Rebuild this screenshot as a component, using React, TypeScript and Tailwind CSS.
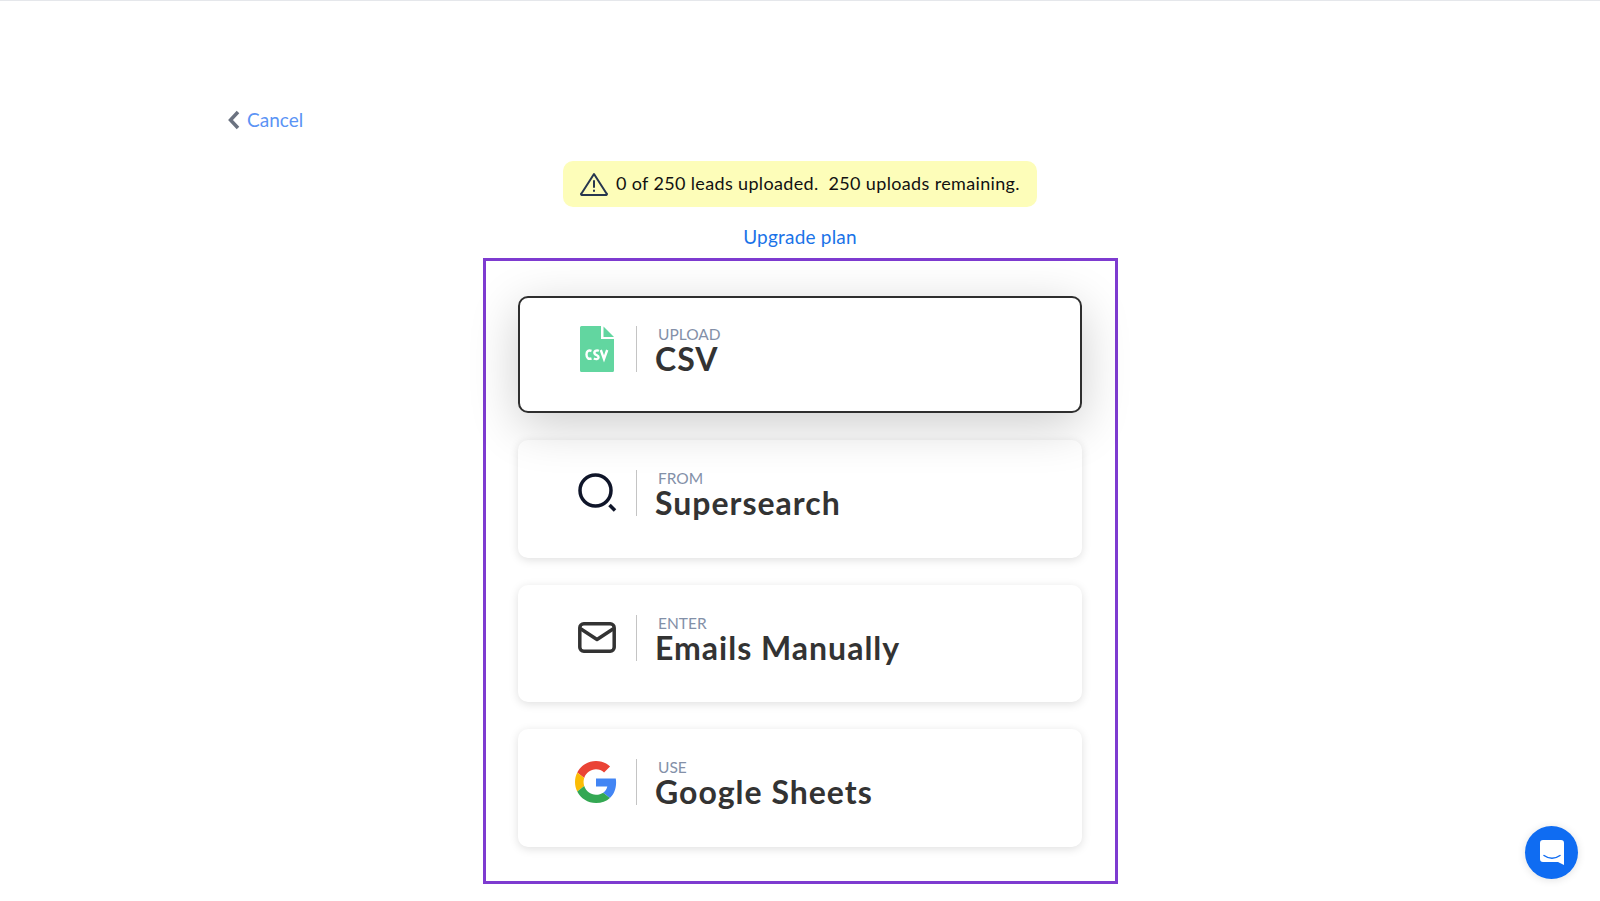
import React from 'react';

const font = { fontFamily: 'Lato, "Noto Sans", sans-serif' };

const CsvIcon = () => (
  <svg width="34" height="46" viewBox="0 0 34 46">
    <path d="M1.500 0H21V13H34V44.500A1.500 1.500 0 0 1 32.500 46H1.500A1.500 1.500 0 0 1 0 44.500V1.500A1.500 1.500 0 0 1 1.500 0Z" fill="#62d6a0" />
    <path d="M23.500 0.500L34 11H23.500Z" fill="#62d6a0" />
    <path d="M11.500 24.800C8.500 23.800 6.500 25 6.500 28.500C6.500 32 8.500 33.500 11.500 32.500M18.800 24.800C16.500 23.800 13.800 25 14.500 27.500C15.200 29.500 18.800 29 18.600 31.500C18.400 33.500 15.800 33.500 13.800 32.500M20.800 24L24 33L27.200 24" fill="none" stroke="#fff" strokeWidth="2.400" />
  </svg>
);

const SearchIcon = () => (
  <svg width="40" height="40" viewBox="0 0 40 40" fill="none" stroke="#0f1529">
    <circle cx="18.500" cy="17.500" r="15.500" strokeWidth="3.500" />
    <path d="M32.500 32L38 37.500" strokeWidth="3.500" />
  </svg>
);

const MailIcon = () => (
  <svg width="38" height="32" viewBox="0 0 38 32" fill="none" stroke="#333" strokeWidth="3.500" strokeLinecap="round" strokeLinejoin="round">
    <rect x="1.800" y="1.800" width="34.400" height="27.400" rx="4" />
    <path d="M3 7L19 17.500L35 7" />
  </svg>
);

const GoogleIcon = () => (
  <svg width="42" height="42" viewBox="0 0 48 48" className="-ml-[2px]">
    <path fill="#EA4335" d="M24 9.500c3.540 0 6.710 1.220 9.210 3.600l6.850-6.850C35.900 2.380 30.470 0 24 0 14.620 0 6.510 5.380 2.560 13.220l7.980 6.190C12.430 13.720 17.740 9.500 24 9.500z" />
    <path fill="#4285F4" d="M46.980 24.550c0-1.570-.15-3.090-.38-4.550H24v9.020h12.940c-.58 2.960-2.260 5.480-4.780 7.180l7.730 6c4.510-4.180 7.090-10.360 7.090-17.650z" />
    <path fill="#FBBC05" d="M10.530 28.590c-.48-1.450-.76-2.990-.76-4.590s.27-3.140.76-4.590l-7.980-6.190C.92 16.460 0 20.120 0 24c0 3.880.92 7.540 2.560 10.780l7.970-6.190z" />
    <path fill="#34A853" d="M24 48c6.480 0 11.930-2.130 15.890-5.810l-7.730-6c-2.150 1.450-4.920 2.300-8.160 2.300-6.260 0-11.570-4.220-13.470-9.910l-7.980 6.190C6.510 42.620 14.620 48 24 48z" />
  </svg>
);

const options = [
  { label: 'UPLOAD', title: 'CSV', icon: <CsvIcon />, active: true },
  { label: 'FROM', title: 'Supersearch', icon: <SearchIcon />, active: false },
  { label: 'ENTER', title: 'Emails Manually', icon: <MailIcon />, active: false },
  { label: 'USE', title: 'Google Sheets', icon: <GoogleIcon />, active: false },
];

export default function App() {
  return (
    <div className="relative h-[901px] overflow-hidden bg-white border-t border-gray-200" style={font}>
      <div className="pl-[227px] pt-[107px] h-[160px]">
        <a className="flex items-center gap-[6px] text-[19px] leading-6 text-[#5b93f5]">
          <svg width="14" height="20" viewBox="0 0 14 20" fill="none" stroke="#6b7280" strokeWidth="3.500">
            <path d="M11 2L3.500 10L11 18" />
          </svg>
          Cancel
        </a>
      </div>

      <div className="flex flex-col items-center">
        <div className="flex items-center w-[474px] h-[46px] pl-[17px] rounded-[10px] bg-[#fdfdb9] text-[18px] tracking-[0.35px] text-[#111]">
          <svg width="28" height="24" viewBox="0 0 28 24" fill="none" stroke="#27364f" strokeWidth="2" strokeLinecap="round" strokeLinejoin="round">
            <path d="M14 2L26.500 21.500A0.800 0.800 0 0 1 26 23H2A0.800 0.800 0 0 1 1.500 21.500Z" />
            <path d="M14 9V15M14 18.500V19" />
          </svg>
          <span className="ml-[8px] -mt-[1px] whitespace-pre">0 of 250 leads uploaded.  250 uploads remaining.</span>
        </div>

        <a className="mt-[18px] h-[33px] text-[19px] tracking-[0.2px] leading-6 text-[#1a73e8]">Upgrade plan</a>

        <div className="flex flex-col gap-[27px] ml-[1px] w-[635px] h-[626px] pt-[35px] pl-[32px] pr-[33px] border-[3px] border-[#7e3bd0]">
          {options.map((o) => (
            <div
              key={o.title}
              className={
                o.active
                  ? 'relative z-10 flex h-[117px] pt-[28px] rounded-[10px] bg-white border-2 border-[#2e2e2e] shadow-[0_12px_50px_rgba(0,0,0,0.2)]'
                  : 'flex h-[117.500px] pt-[30px] rounded-[10px] bg-white shadow-[0_2px_10px_rgba(0,0,0,0.13)]'
              }
            >
              <div
                className={
                  o.active
                    ? 'flex items-center justify-center w-[116px] h-[46px] pl-[38px]'
                    : 'flex items-center justify-center w-[118px] h-[46px] pl-[40px]'
                }
              >
                {o.icon}
              </div>
              <div className="w-px h-[46px] bg-[#c4c4c4]" />
              <div className="pl-[18px] -mt-[1px]">
                <div className="pl-[3px] text-[15.500px] leading-[18px] text-[#8390a8]">{o.label}</div>
                <div className="text-[32px] tracking-[1px] leading-[32px] font-bold text-[#333]">{o.title}</div>
              </div>
            </div>
          ))}
        </div>
      </div>

      <div className="absolute right-[22px] bottom-[22px] flex items-center justify-center w-[53px] h-[53px] rounded-full bg-[#0f6cf2] shadow-[0_1px_8px_rgba(0,0,0,0.12)]">
        <svg width="24" height="25" viewBox="0 0 24 25">
          <path d="M3 0H21A3 3 0 0 1 24 3V25L18 22H3A3 3 0 0 1 0 19V3A3 3 0 0 1 3 0Z" fill="#fff" />
          <path d="M4 15.500C9 19 15 19 20 15.500" fill="none" stroke="#0f6cf2" strokeWidth="1.500" strokeLinecap="round" />
        </svg>
      </div>
    </div>
  );
}
